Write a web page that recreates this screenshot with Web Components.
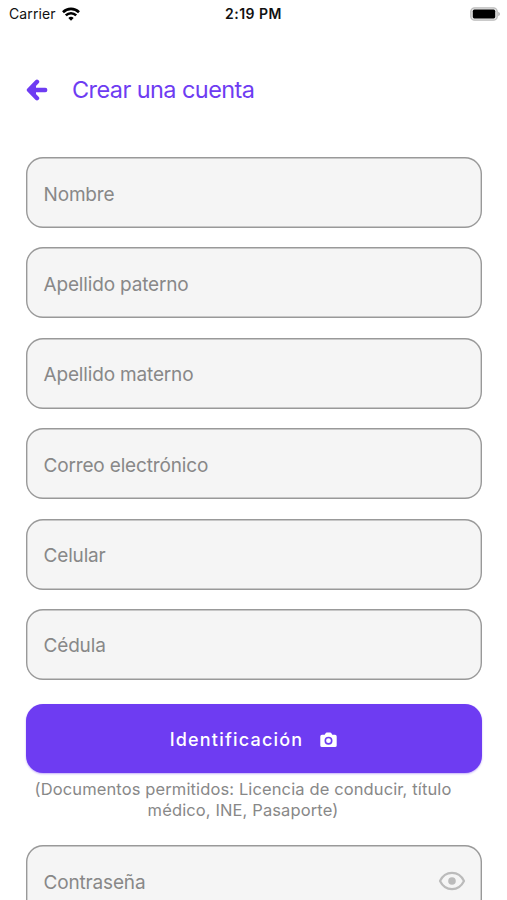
<!DOCTYPE html>
<html lang="es">
<head>
<meta charset="utf-8">
<meta name="viewport" content="width=device-width, initial-scale=1">
<title>Crear una cuenta</title>
<style>
  html, body {
    height: 100%;
  }
  body {
    margin: 0;
    overflow: hidden;
    background: #fff;
    font-family: Inter, "Liberation Sans", sans-serif;
  }
</style>
</head>
<body>
<signup-screen>
  <status-bar slot="status" carrier="Carrier" time="2:19 PM"></status-bar>
  <page-header slot="header">Crear una cuenta</page-header>
  <form-field>Nombre</form-field>
  <form-field>Apellido paterno</form-field>
  <form-field>Apellido materno</form-field>
  <form-field>Correo electrónico</form-field>
  <form-field>Celular</form-field>
  <form-field>Cédula</form-field>
  <upload-button>
    Identificación
    <span slot="hint">(Documentos permitidos: Licencia de conducir, título<br>médico, INE, Pasaporte)</span>
  </upload-button>
  <form-field secret>Contraseña</form-field>
</signup-screen>

<script>
(function () {
  class BaseElement extends HTMLElement {
    connectedCallback() {
      if (!this.shadowRoot) {
        this.attachShadow({ mode: "open" });
      }
      this.shadowRoot.innerHTML = this.template();
    }
  }

  class SignupScreen extends BaseElement {
    template() {
      return `
    <style>
      :host {
        display: flex;
        flex-direction: column;
        height: 100vh;
        overflow: hidden;
      }
      main {
        display: flex;
        flex-direction: column;
        gap: 19.4px;
        padding: 0 25px 0 26px;
      }
    </style>
    <slot name="status"></slot>
    <slot name="header"></slot>
    <main><slot></slot></main>
    `;
    }
  }

  class StatusBar extends BaseElement {
    template() {
      return `
    <style>
      :host {
        display: grid;
        grid-template-columns: 1fr auto 1fr;
        align-items: center;
        flex: none;
        height: 28px;
        box-sizing: border-box;
        padding: 0 7px 0 9px;
        color: #111;
        font-size: 14px;
        line-height: 28px;
      }
      .carrier {
        display: flex;
        align-items: center;
        gap: 6px;
      }
      .carrier span {
        letter-spacing: 0.1px;
      }
      .time {
        margin-right: 2px;
        font-weight: 600;
        letter-spacing: 0.5px;
      }
      .battery {
        justify-self: end;
      }
      svg {
        display: block;
        margin-top: -1px;
      }
    </style>
    <div class="carrier">
      <span>${this.getAttribute("carrier")}</span>
      <svg width="18" height="14" viewBox="0 0 18 14" fill="none" stroke="#000" stroke-width="2.6">
        <path d="M1 5.200a11.400 11.400 0 0 1 16 0"/>
        <path d="M3.800 8.400a7.400 7.400 0 0 1 10.400 0"/>
        <path d="M9 13.800 6.300 11a3.800 3.800 0 0 1 5.400 0z" fill="#000" stroke="none"/>
      </svg>
    </div>
    <div class="time">${this.getAttribute("time")}</div>
    <svg class="battery" width="30" height="14" viewBox="0 0 30 14">
      <rect x=".8" y=".8" width="26.4" height="12.4" rx="3.8" fill="#e4e4e4" stroke="#bbb" stroke-width="1.3"/>
      <rect x="2.8" y="2.6" width="22.4" height="8.8" rx="1.6" fill="#000"/>
      <path d="M28.300 4.800q1.600.7 1.600 2.200t-1.600 2.200z" fill="#aaa"/>
    </svg>
    `;
    }
  }

  class PageHeader extends BaseElement {
    template() {
      return `
    <style>
      :host {
        display: flex;
        align-items: center;
        flex: none;
        gap: 24px;
        height: 124px;
        margin-bottom: 5px;
        padding-left: 26px;
        color: #6e3cf2;
      }
      h1 {
        margin: -2px 0 0;
        font-size: 23.5px;
        font-weight: 400;
        letter-spacing: -0.58px;
      }
    </style>
    <svg width="22" height="22" viewBox="0 0 22 22" fill="none" stroke="currentColor" stroke-width="4.4" stroke-linecap="round" stroke-linejoin="round">
      <path d="M11 2.800 3 11l8 8.200M3.400 11h15.800"/>
      <path d="M10 5 4 11l6 6z" fill="currentColor" stroke="none"/>
    </svg>
    <h1><slot></slot></h1>
    `;
    }
  }

  class FormField extends BaseElement {
    template() {
      const eye = this.hasAttribute("secret")
        ? `<svg width="28" height="20" viewBox="0 0 28 20" fill="none" stroke="#bbb" stroke-width="2.2">
        <path d="M2 10C7.300-.8 20.700-.8 26 10 20.700 20.800 7.300 20.800 2 10z" stroke-linejoin="round"/>
        <circle cx="14" cy="10" r="3.800" fill="#bbb" stroke="none"/>
      </svg>`
        : "";
      return `
    <style>
      :host {
        display: flex;
        align-items: center;
        justify-content: space-between;
        flex: none;
        box-sizing: border-box;
        height: 71px;
        padding: 3px 16px 0 17.5px;
        border-radius: 17px;
        background: #f5f5f5;
        box-shadow: inset 0 0 0 1.4px #999;
        color: #888;
        font-size: 19px;
        letter-spacing: -0.16px;
      }
      svg {
        margin-top: -3px;
      }
    </style>
    <span><slot></slot></span>
    ${eye}
    `;
    }
  }

  class UploadButton extends BaseElement {
    template() {
      return `
    <style>
      :host {
        display: block;
        flex: none;
        margin: 5px 0 4.6px;
      }
      button {
        display: flex;
        align-items: center;
        justify-content: center;
        gap: 17px;
        width: 100%;
        height: 68.5px;
        padding: 1px 1px 0 0;
        border: 0;
        border-radius: 17px;
        background: #6e3cf2;
        box-shadow: 0 1px 2px rgba(110, 60, 242, 0.4);
        color: #fff;
        font: 500 18px Inter, "Liberation Sans", sans-serif;
        letter-spacing: 1.2px;
      }
      svg {
        margin-top: 2px;
      }
      p {
        margin: 6.5px 0 0;
        padding-right: 22px;
        color: #888;
        font-size: 16.5px;
        line-height: 21px;
        letter-spacing: 0.12px;
        text-align: center;
      }
    </style>
    <button type="button">
      <span><slot></slot></span>
      <svg width="17" height="16" viewBox="0 0 17 16">
        <path fill="#fff" fill-rule="evenodd" d="M5.600 1.200Q6 .5 6.800 .5h3.400q.8 0 1.200.7l.9 1.500H15q1.700 0 1.700 1.700v9q0 1.700-1.700 1.700H2q-1.700 0-1.700-1.700v-9Q.3 2.700 2 2.700h2.700zM8.500 4.700a4 4 0 1 0 0 8 4 4 0 0 0 0-8zm0 1.600a2.400 2.400 0 1 1 0 4.800 2.400 2.400 0 0 1 0-4.800z"/>
      </svg>
    </button>
    <p><slot name="hint"></slot></p>
    `;
    }
  }

  window.customElements.define("signup-screen", SignupScreen);
  window.customElements.define("status-bar", StatusBar);
  window.customElements.define("page-header", PageHeader);
  window.customElements.define("form-field", FormField);
  window.customElements.define("upload-button", UploadButton);
})();
</script>
</body>
</html>
